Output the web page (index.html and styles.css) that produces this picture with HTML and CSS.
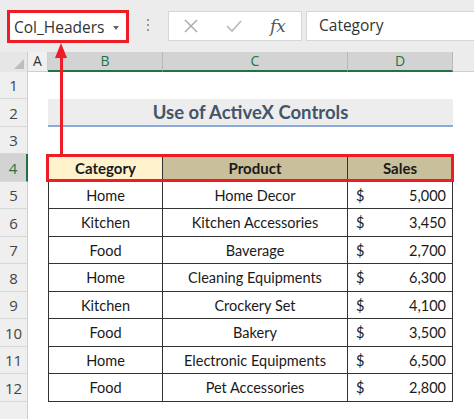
FILE: index.html
```html
<!DOCTYPE html>
<html>
<head>
<meta charset="utf-8">
<link rel="stylesheet" href="styles.css">
</head>
<body>
<div class="app">
  <div class="topbar">
    <div class="namebox"><span class="nb-text">Col_Headers</span><span class="nb-caret"></span></div>
    <div class="dots"><i></i><i></i><i></i></div>
    <div class="fbtns">
      <svg class="ic" width="16" height="16" viewBox="0 0 16 16"><path d="M2 2 L14 14 M14 2 L2 14" stroke="#a6a6a6" stroke-width="1.4" fill="none"/></svg>
      <svg class="ic" width="18" height="16" viewBox="0 0 18 16"><path d="M2 8 L7 13 L16 3" stroke="#b8b8b8" stroke-width="1.6" fill="none"/></svg>
      <span class="fx">fx</span>
    </div>
    <div class="finput">Category</div>
  </div>

  <div class="sheet">
    <div class="hrow">
      <div class="corner"><span class="tri"></span></div>
      <div class="ch ch-a">A</div>
      <div class="ch sel">B</div>
      <div class="ch sel">C</div>
      <div class="ch sel">D</div>
      <div class="ch rest"></div>
    </div>

    <div class="row"><div class="rh">1</div><div></div><div></div><div></div><div></div><div></div></div>
    <div class="row r28"><div class="rh">2</div><div></div><div class="title">Use of ActiveX Controls</div><div></div></div>
    <div class="row"><div class="rh">3</div><div></div><div></div><div></div><div></div><div></div></div>
    <div class="row r28 thead"><div class="rh cur">4</div><div></div><div class="c cat">Category</div><div class="c prod">Product</div><div class="c prod">Sales</div><div></div></div>
    <div class="row tb"><div class="rh">5</div><div></div><div class="c">Home</div><div class="c">Home Decor</div><div class="c m"><span>$</span><span>5,000</span></div><div></div></div>
    <div class="row r28 tb"><div class="rh">6</div><div></div><div class="c">Kitchen</div><div class="c">Kitchen Accessories</div><div class="c m"><span>$</span><span>3,450</span></div><div></div></div>
    <div class="row tb"><div class="rh">7</div><div></div><div class="c">Food</div><div class="c">Baverage</div><div class="c m"><span>$</span><span>2,700</span></div><div></div></div>
    <div class="row r28 tb"><div class="rh">8</div><div></div><div class="c">Home</div><div class="c">Cleaning Equipments</div><div class="c m"><span>$</span><span>6,300</span></div><div></div></div>
    <div class="row tb"><div class="rh">9</div><div></div><div class="c">Kitchen</div><div class="c">Crockery Set</div><div class="c m"><span>$</span><span>4,100</span></div><div></div></div>
    <div class="row r28 tb"><div class="rh">10</div><div></div><div class="c">Food</div><div class="c">Bakery</div><div class="c m"><span>$</span><span>3,500</span></div><div></div></div>
    <div class="row tb"><div class="rh">11</div><div></div><div class="c">Home</div><div class="c">Electronic Equipments</div><div class="c m"><span>$</span><span>6,500</span></div><div></div></div>
    <div class="row r28 tb"><div class="rh">12</div><div></div><div class="c">Food</div><div class="c">Pet Accessories</div><div class="c m"><span>$</span><span>2,800</span></div><div></div></div>
    <div class="row"><div class="rh"></div><div></div><div></div><div></div><div></div><div></div></div>

    <div class="redrow"></div>
    <div class="arrow"><span class="head"></span><span class="shaft"></span></div>
  </div>
</div>
</body>
</html>
```

FILE: styles.css
```css
* { box-sizing: border-box; margin: 0; padding: 0; }
html, body { width: 474px; height: 419px; overflow: hidden; background: #fff; }
body { font-family: "Lato", "Open Sans", sans-serif; color: #222; }

.app { width: 474px; height: 419px; position: relative; }

.topbar {
  height: 52px;
  background: #ececec;
  display: flex;
  align-items: flex-start;
  padding: 10px 0 0 7px;
}
.namebox {
  width: 122px; height: 33px;
  border: 3px solid #ee1c25;
  background: #fff;
  display: flex; align-items: center;
  padding-left: 4px;
  position: relative;
}
.nb-text { font-family: "Open Sans", sans-serif; font-size: 15.5px; color: #333; }
.nb-caret {
  position: absolute; right: 7px; top: 13px;
  width: 0; height: 0;
  border-left: 3.5px solid transparent; border-right: 3.5px solid transparent;
  border-top: 4px solid #666;
}
.dots {
  width: 39px; height: 30px;
  display: flex; flex-direction: column; align-items: center; justify-content: center; gap: 3px;
  padding-right: 2px;
}
.dots i { display: block; width: 2px; height: 2px; background: #9a9a9a; }
.fbtns {
  width: 134px; height: 30px; margin-top: 1px;
  background: #fff; border: 1px solid #d6d6d6;
  display: flex; align-items: center;
  padding-left: 14px;
}
.fbtns .ic:nth-child(1) { margin-right: 26px; }
.fbtns .ic:nth-child(2) { margin-right: 27px; }
.fx { font-family: "DejaVu Serif", "Liberation Serif", serif; font-style: italic; font-size: 17px; color: #555; }
.finput {
  flex: 1; height: 30px; margin-top: 1px; margin-left: 4px;
  background: #fff; border: 1px solid #d6d6d6; border-right: none;
  font-family: "Open Sans", sans-serif; font-size: 15.5px; color: #333;
  padding-left: 12px; line-height: 27px;
}

.sheet { position: relative; }
.hrow, .row {
  display: grid;
  grid-template-columns: 28px 20px 115px 185px 105px 1fr;
}
.hrow { height: 20px; }
.corner { background: #e6e6e6; border-right: 1px solid #cfcfcf; position: relative; }
.tri {
  position: absolute; right: 3px; bottom: 3px; width: 0; height: 0;
  border-left: 10px solid transparent; border-bottom: 10px solid #bdbdbd;
}
.ch {
  font-family: "Open Sans", sans-serif; font-size: 14px; line-height: 18px; text-align: center;
  border-right: 1px solid #cfcfcf;
}
.ch-a { background: #f0f0f0; color: #333; border-bottom: 1px solid #cfcfcf; }
.ch.sel { background: #d3d3d3; color: #217346; border-bottom: 2px solid #217346; border-right-color: #b8b8b8; }
.ch.rest { background: #ececec; border-right: none; border-bottom: 1px solid #cfcfcf; }

.row { height: 27px; }
.row.r28 { height: 28px; }
.rh {
  background: #efefef; border-right: 1px solid #cfcfcf; border-bottom: 1px solid #d8d8d8;
  font-family: "Open Sans", sans-serif; font-size: 15px; color: #444;
  display: flex; align-items: center; justify-content: center;
}
.rh.cur { background: #d3d3d3; color: #217346; border-right: 2px solid #217346; }

.title {
  grid-column: 3 / 6;
  background: #ededed; border-bottom: 2px solid #8eaadb;
  font-weight: 700; font-size: 18.5px; color: #44546a;
  display: flex; align-items: center; justify-content: center;
}

.c {
  font-size: 14.5px; color: #1a1a1a;
  display: flex; align-items: center; justify-content: center;
  border-right: 1px solid #333; border-bottom: 1px solid #333;
}
.row > .c:nth-child(3) { border-left: 1px solid #333; }
.thead .c { border-top: 1px solid #333; font-weight: 700; font-size: 15px; }
.cat { background: #fff2cc; }
.prod { background: #c9bf9b; }
.c.m { justify-content: space-between; padding: 0 6px 0 8px; }

.redrow {
  position: absolute; left: 46px; top: 102px; width: 408px; height: 28px;
  border: 3px solid #ee1c25;
}
.arrow {
  position: absolute; left: 54px; top: -9px; width: 14px; height: 113px;
  display: flex; flex-direction: column; align-items: center;
}
.arrow .head {
  width: 0; height: 0;
  border-left: 6px solid transparent; border-right: 6px solid transparent;
  border-bottom: 15px solid #ee1c25;
}
.arrow .shaft { width: 3px; flex: 1; background: #ee1c25; }
```
